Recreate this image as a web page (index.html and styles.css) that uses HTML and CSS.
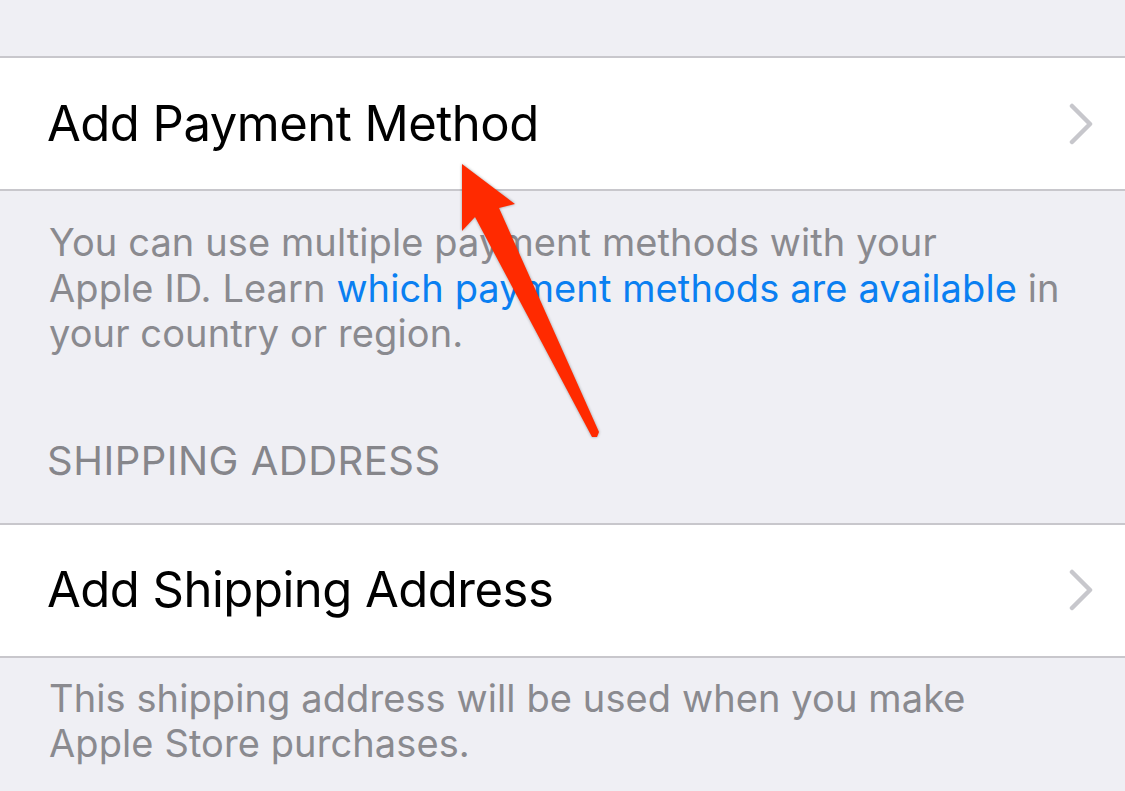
FILE: index.html
```html
<!DOCTYPE html>
<html>
<head>
<meta charset="utf-8">
<link rel="stylesheet" href="styles.css">
</head>
<body>
<div class="screen">
  <div class="top-space"></div>
  <div class="cell">
    <span class="cell-label">Add Payment Method</span>
    <svg class="chevron" width="26" height="42" viewBox="0 0 26 42"><polyline points="3,3 21,21 3,39" fill="none" stroke="#c7c7cc" stroke-width="4.5" stroke-linecap="round" stroke-linejoin="round"/></svg>
  </div>
  <p class="footer footer-first">You can use multiple payment methods with your<br>Apple ID. Learn <span class="link">which payment methods are available</span> in<br>your country or region.</p>
  <div class="header">SHIPPING ADDRESS</div>
  <div class="cell">
    <span class="cell-label">Add Shipping Address</span>
    <svg class="chevron" width="26" height="42" viewBox="0 0 26 42"><polyline points="3,3 21,21 3,39" fill="none" stroke="#c7c7cc" stroke-width="4.5" stroke-linecap="round" stroke-linejoin="round"/></svg>
  </div>
  <p class="footer footer-second">This shipping address will be used when you make<br>Apple Store purchases.</p>

  <svg class="arrow" width="1125" height="791" viewBox="0 0 1125 791">
    <polygon points="462,164 515,204 499,208 599,432 597,437 592,437 475,217 462,231" fill="#ff2a00"/>
  </svg>
</div>
</body>
</html>
```

FILE: styles.css
```css
html, body {
  margin: 0;
  padding: 0;
  background: #efeff4;
}

.screen {
  position: relative;
  width: 1125px;
  height: 791px;
  overflow: hidden;
  background: #efeff4;
  font-family: "Inter", "Roboto", "Liberation Sans", sans-serif;
}

.top-space {
  height: 56px;
}

.cell {
  box-sizing: border-box;
  height: 135px;
  border-top: 2px solid #c8c7cc;
  border-bottom: 2px solid #c8c7cc;
  background: #ffffff;
  display: flex;
  align-items: center;
  justify-content: space-between;
  padding: 0 30px 0 47px;
}

.cell-label {
  font-size: 49px;
  color: #000000;
  line-height: 1.21;
  letter-spacing: -0.5px;
}

.chevron {
  display: block;
}

.footer {
  margin: 0;
  padding: 0 20px 0 49px;
  font-size: 38px;
  line-height: 45.5px;
  color: #8a8a8f;
  white-space: nowrap;
  letter-spacing: 0.1px;
}

.footer-first {
  padding-top: 29px;
}

.footer-second {
  padding-top: 18px;
}

.link {
  color: #0a7ff1;
}

.header {
  margin-top: 80px;
  margin-bottom: 38px;
  padding-left: 47px;
  font-size: 40px;
  line-height: 48px;
  letter-spacing: 0.5px;
  color: #86868b;
}

.arrow {
  position: absolute;
  left: 0;
  top: 0;
  pointer-events: none;
  filter: drop-shadow(0 0 1.5px rgba(0, 0, 0, 0.35));
}
```
